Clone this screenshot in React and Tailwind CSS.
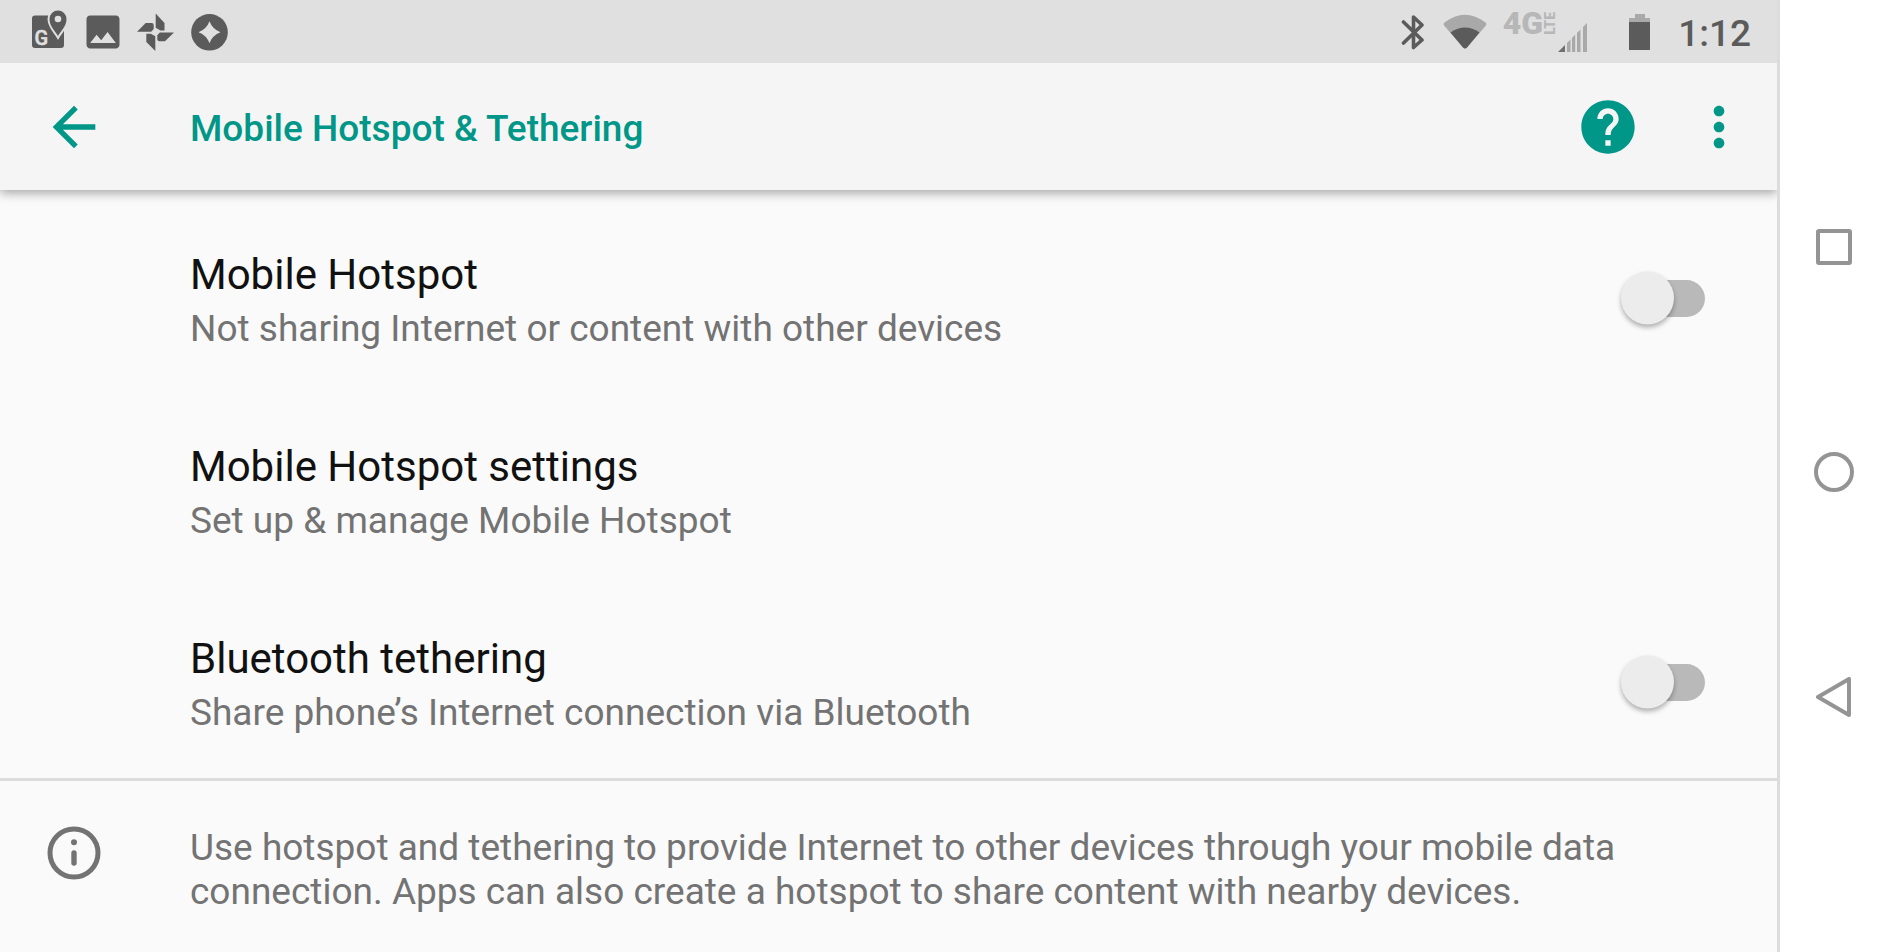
import React, { useState } from 'react';
import { MdArrowBack, MdHelp, MdImage, MdMoreVert } from 'react-icons/md';

const App = () => {
    const [hotspot, setHotspot] = useState(false);
    const [bluetooth, setBluetooth] = useState(false);

    return (
        <div className="flex min-h-screen bg-white font-['Roboto',sans-serif]">
            <div className="flex min-w-0 flex-1 flex-col border-r-3 border-[#dcdcdc] bg-[#fafafa]">
                <StatusBar />

                {/* App bar */}
                <header className="relative flex h-[127px] items-center bg-[#f5f5f5] pr-[26px] text-[#009688] shadow-[0_3px_10px_rgba(0,0,0,0.35)] [clip-path:inset(0_0_-20px_0)]">
                    <div className="w-[190px] shrink-0 pl-[42px]">
                        <button type="button" aria-label="Navigate up" className="block">
                            <MdArrowBack size={64} />
                        </button>
                    </div>
                    <h1 className="flex-1 pt-1 text-[37px] leading-[44px] font-medium">Mobile Hotspot &amp; Tethering</h1>
                    <button type="button" aria-label="Help" className="mr-[47px] block">
                        <MdHelp size={64} />
                    </button>
                    <button type="button" aria-label="More options" className="block">
                        <MdMoreVert size={64} />
                    </button>
                </header>

                <main className="flex flex-1 flex-col pt-3">
                    <SettingRow
                        id="hotspot"
                        title="Mobile Hotspot"
                        summary="Not sharing Internet or content with other devices"
                        checked={hotspot}
                        onChange={setHotspot}
                    />
                    <SettingRow title="Mobile Hotspot settings" summary="Set up &amp; manage Mobile Hotspot" />
                    <SettingRow
                        id="bluetooth"
                        title="Bluetooth tethering"
                        summary="Share phone’s Internet connection via Bluetooth"
                        checked={bluetooth}
                        onChange={setBluetooth}
                    />

                    {/* Footer note */}
                    <div className="flex flex-1 items-start border-t-3 border-[#dcdcdc] pt-[45px] text-[#737373]">
                        <div className="w-[190px] shrink-0 pl-[47px]">
                            <svg viewBox="0 0 54 54" className="size-[54px]" fill="none" stroke="currentColor" strokeWidth="5">
                                <circle cx="27" cy="27" r="24" />
                                <path d="M27 27v10" strokeLinecap="round" strokeWidth="5.4" />
                                <circle cx="27" cy="16.3" r="3" fill="currentColor" stroke="none" />
                            </svg>
                        </div>
                        <p className="flex-1 pr-[120px] text-[37px] leading-[44px]">
                            Use hotspot and tethering to provide Internet to other devices through your mobile data connection. Apps can also
                            create a hotspot to share content with nearby devices.
                        </p>
                    </div>
                </main>
            </div>

            {/* System navigation */}
            <nav className="flex w-[124px] shrink-0 flex-col items-center justify-center pr-4 pb-2 text-[#949494]">
                <NavButton label="Recent apps">
                    <rect x="4" y="4" width="32" height="32" rx="1" />
                </NavButton>
                <NavButton label="Home">
                    <circle cx="20" cy="20" r="18" />
                </NavButton>
                <NavButton label="Back">
                    <path d="M35 2v36L4 20z" />
                </NavButton>
            </nav>
        </div>
    );
};

const SettingRow = ({ id, title, summary, checked, onChange }) => {
    const text = (
        <>
            <span className="block text-[42px] leading-[56px] text-[#111111]">{title}</span>
            <span className="block text-[37px] leading-[52px] text-[#737373]">{summary}</span>
        </>
    );

    return (
        <div className="flex h-48 items-center pr-[72px] pl-[190px]">
            {id ? (
                <label htmlFor={id} className="flex-1 pt-1.5">{text}</label>
            ) : (
                <button type="button" className="flex-1 pt-1.5 text-left">{text}</button>
            )}
            {id && (
                <input
                    id={id}
                    type="checkbox"
                    role="switch"
                    checked={checked}
                    onChange={(e) => onChange(e.target.checked)}
                    className="relative h-[37px] w-[76px] appearance-none rounded-full bg-[#b9b9b9] before:absolute before:top-1/2 before:-left-2 before:size-[53px] before:-translate-y-1/2 before:rounded-full before:bg-[#ececec] before:shadow-[0_3px_5px_rgba(0,0,0,0.3)] checked:bg-[#80cbc4] checked:before:left-8 checked:before:bg-[#009688]"
                />
            )}
        </div>
    );
};

const NavButton = ({ label, children }) => (
    <button type="button" aria-label={label} className="flex h-[225px] w-full items-center justify-center">
        <svg viewBox="0 0 40 40" className="size-10" fill="none" stroke="currentColor" strokeWidth="4" strokeLinejoin="round">
            {children}
        </svg>
    </button>
);

const StatusBar = () => (
    <div className="flex h-[63px] items-center justify-between bg-[#e0e0e0] pr-[26px] pl-[27px] text-[#5b5b5b]">
        <div className="flex items-center gap-[10px]">
            {/* Maps */}
            <svg viewBox="0 0 44 44" className="size-11" fill="currentColor">
                <rect x="5" y="5.5" width="32" height="32.5" rx="3" />
                <text x="7.5" y="34.5" fontSize="20" fontWeight="500" fill="#e0e0e0" stroke="#e0e0e0" strokeWidth="0.5">G</text>
                <path
                    d="M31 26c-3-5-8.5-10-8.5-17a8.5 8.5 0 0 1 17 0c0 7-5.5 12-8.5 17z"
                    stroke="#e0e0e0"
                    strokeWidth="4"
                    paintOrder="stroke"
                />
                <circle cx="31" cy="9" r="3.3" fill="#e0e0e0" />
            </svg>
            <MdImage size={44} />
            {/* Photos */}
            <svg viewBox="0 0 44 44" className="size-11" fill="currentColor">
                <path d="M20.7 3.5l8.8 9.5v7.5h-4l-4.8-2.7z" />
                <path d="M2 21.8L10.7 13h6q2 0 2 2v4l-2.5 2.8z" />
                <path d="M20.3 41L11.3 32v-8.3h4.5l4.5 2.500z" />
                <path d="M39 22.5L30 31.3h-5.5q-2.2 0-2.2-2v-4l2.5-2.8z" />
            </svg>
            {/* Sparkle badge */}
            <svg viewBox="0 0 44 44" className="size-11" fill="currentColor">
                <circle cx="20.5" cy="22.3" r="18.3" />
                <path d="M20.5 11.3q3 8 11 11q-8 3-11 11q-3-8-11-11q8-3 11-11z" fill="#e0e0e0" />
            </svg>
        </div>

        <div className="flex items-center">
            {/* Bluetooth */}
            <svg viewBox="0 0 24 36" className="h-9 w-6" fill="none" stroke="currentColor" strokeWidth="3.6" strokeLinecap="round" strokeLinejoin="round">
                <path d="M2.5 8L21 26L12.5 33.5V3L21 11L2.5 29" />
            </svg>
            {/* Wifi */}
            <svg viewBox="0 0 44 36" className="ml-[18px] h-9 w-11" fill="currentColor">
                <path d="M1.5 8.5Q22-7 42.5 8.5Q44 10 42.5 12L24 33.5Q22 35.5 20 33.5L1.5 12Q0 10 1.5 8.5z" fill="#a9a9a9" />
                <path d="M7.5 18.5Q22 8.5 36.5 18.5L24 33.5Q22 35.5 20 33.5z" />
            </svg>
            {/* Mobile data */}
            <div className="ml-4 flex h-10 items-start text-[#b7b7b7]">
                <span className="text-[32px] leading-[22px] font-black">4G</span>
                <span className="rotate-180 text-[14px] leading-[14px] font-black [writing-mode:vertical-rl]">LTE</span>
                <svg viewBox="0 0 30 30" className="ml-px size-[30px] self-end" fill="#a9a9a9">
                    <path d="M0 30l7-7v7z" fill="#707070" />
                    <path d="M9 21l3.5-3.5V30H9zM14 16l3.2-3.2V30H14zM19 11l3.5-3.5V30H19zM25 5l4-4V30h-4z" />
                </svg>
            </div>
            {/* Battery */}
            <svg viewBox="0 0 22 36" className="ml-[41px] h-9 w-[22px]" fill="currentColor">
                <path d="M6 0h10v4h5v4H0V4h6z" fill="#a9a9a9" />
                <path d="M0 8h21v28H0z" />
            </svg>
            <span className="ml-[27px] pt-1 text-[37px] leading-[44px] font-medium">1:12</span>
        </div>
    </div>
);

export default App;
